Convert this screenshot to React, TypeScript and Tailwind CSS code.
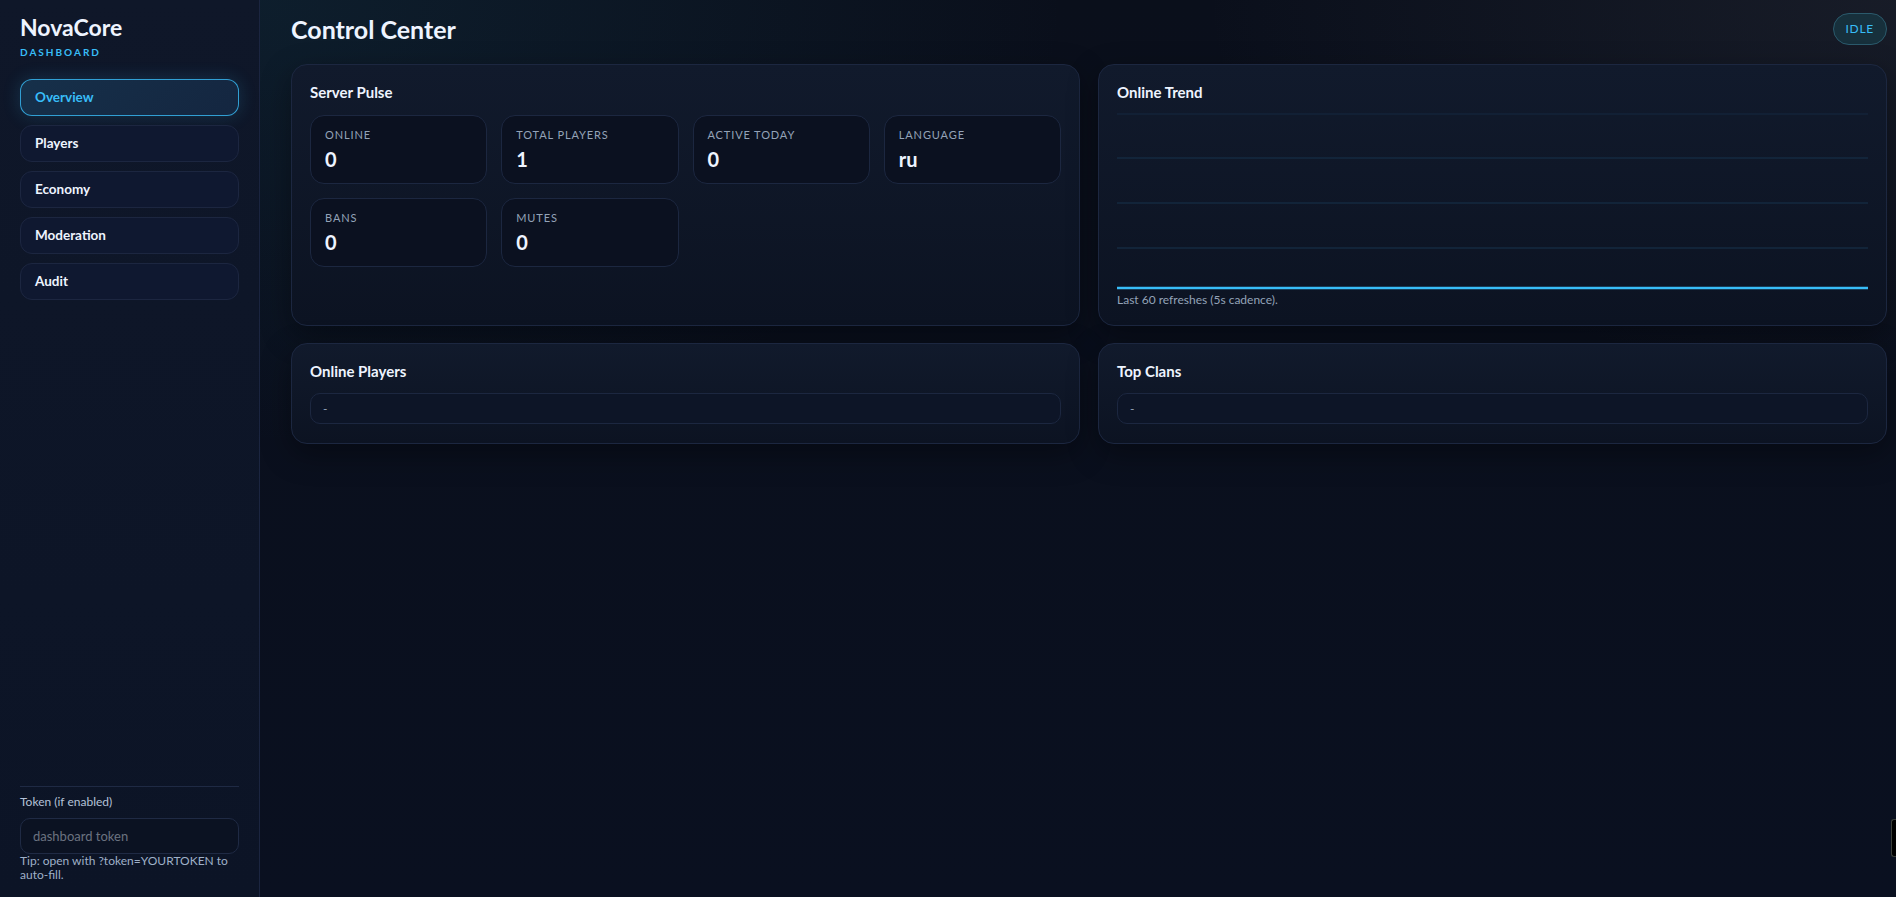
import React from "react";

const navItems = ["Overview", "Players", "Economy", "Moderation", "Audit"];

const stats: { label: string; value: string }[] = [
  { label: "Online", value: "0" },
  { label: "Total Players", value: "1" },
  { label: "Active Today", value: "0" },
  { label: "Language", value: "ru" },
  { label: "Bans", value: "0" },
  { label: "Mutes", value: "0" },
];

function Card({ title, children, tall }: { title: string; children: React.ReactNode; tall?: boolean }) {
  return (
    <div
      className={
        tall
          ? "rounded-[16px] border border-[#1c2740] bg-[linear-gradient(180deg,#111a2c_0%,#0c1322_100%)] px-[18px] pt-[17px] pb-[19px] shadow-[0_10px_30px_rgba(0,0,0,0.35)]"
          : "rounded-[16px] border border-[#1c2740] bg-[linear-gradient(180deg,#111a2c_0%,#0c1322_100%)] px-[18px] pt-[17px] pb-[17px] shadow-[0_10px_30px_rgba(0,0,0,0.35)]"
      }
    >
      <h2 className="text-[15px] leading-[20px] font-bold text-[#eef4ff]">{title}</h2>
      {children}
    </div>
  );
}

export default function App() {
  return (
    <div className="flex h-[897px] w-full overflow-hidden bg-[#0a0f1c] font-['Lato','Noto_Sans',sans-serif] text-slate-100">
      {/* Sidebar */}
      <aside className="flex h-full w-[260px] shrink-0 flex-col border-r border-[#1b2540] bg-[linear-gradient(180deg,#0f1729_0%,#0c1426_100%)] px-5 pt-[14px] pb-[15px]">
        <div className="text-[23px] leading-[26px] font-bold text-[#eef4ff]">NovaCore</div>
        <div className="mt-[6px] text-[10px] leading-[12px] font-bold tracking-[0.2em] text-[#38bdf8]">DASHBOARD</div>
        <nav className="mt-[21px] flex flex-col gap-[9px]">
          {navItems.map((item, i) =>
            i === 0 ? (
              <div
                key={item}
                className="flex h-[37px] items-center rounded-[12px] border border-[#38bdf8]/80 bg-[linear-gradient(135deg,#16304a_0%,#142640_100%)] px-[14px] text-[13.5px] font-bold text-[#38bdf8] shadow-[0_0_18px_rgba(56,189,248,0.18)]"
              >
                {item}
              </div>
            ) : (
              <div
                key={item}
                className="flex h-[37px] items-center rounded-[12px] border border-[#1c2640] bg-[#0f1830] px-[14px] text-[13.5px] font-bold text-[#eef4ff]"
              >
                {item}
              </div>
            )
          )}
        </nav>
        <div className="mt-auto border-t border-[#1f2a44] pt-[7px]">
          <div className="text-[12px] leading-[16px] text-[#b4c2d8]">Token (if enabled)</div>
          <input
            className="mt-[8px] h-[36px] w-full rounded-[10px] border border-[#1f2a44] bg-[#0b1222] px-[12px] text-[13px] text-slate-200 outline-none placeholder:text-[#6b7280]"
            placeholder="dashboard token"
          />
          <div className="text-[12px] leading-[14px] text-[#9fb0c8]">Tip: open with ?token=YOURTOKEN to auto-fill.</div>
        </div>
      </aside>

      {/* Main */}
      <main className="relative flex-1 bg-[radial-gradient(ellipse_at_0%_0%,rgba(34,120,150,0.14),transparent_35%),radial-gradient(ellipse_at_100%_0%,rgba(120,120,130,0.12),transparent_30%),linear-gradient(180deg,#0a0f1b_0%,#0a1020_100%)] pt-[13px] pr-[9px] pl-[31px]">
        <header className="flex h-[32px] items-center justify-between">
          <h1 className="text-[25px] leading-[30px] font-bold text-[#eef4ff]">Control Center</h1>
          <span className="flex h-[32px] items-center rounded-full border border-[#2b5a6c] bg-[#17303c] px-[12px] text-[12px] tracking-[0.06em] text-[#38bdf8]">
            IDLE
          </span>
        </header>

        <div className="mt-[19px] grid grid-cols-2 gap-x-[18px] gap-y-[17px]">
          <Card title="Server Pulse">
            <div className="mt-[13px] grid grid-cols-4 gap-[14px]">
              {stats.map((s) => (
                <div
                  key={s.label}
                  className="h-[69px] rounded-[14px] border border-[#1c2740] bg-[#0b1120] px-[14px] pt-[12px]"
                >
                  <div className="text-[11px] leading-[14px] tracking-[0.08em] text-[#94a3b8] uppercase">{s.label}</div>
                  <div className="mt-[5px] text-[20px] leading-[24px] font-bold text-[#eef4ff]">{s.value}</div>
                </div>
              ))}
            </div>
          </Card>

          <Card title="Online Trend">
            <svg className="mt-[10px] block h-[180px] w-full" preserveAspectRatio="none" viewBox="0 0 1000 180">
              <line x1="0" y1="2" x2="1000" y2="2" stroke="#13233a" strokeWidth="1.5" vectorEffect="non-scaling-stroke" />
              <line x1="0" y1="46" x2="1000" y2="46" stroke="#152a40" strokeWidth="1.5" vectorEffect="non-scaling-stroke" />
              <line x1="0" y1="91" x2="1000" y2="91" stroke="#152a40" strokeWidth="1.5" vectorEffect="non-scaling-stroke" />
              <line x1="0" y1="136" x2="1000" y2="136" stroke="#152a40" strokeWidth="1.5" vectorEffect="non-scaling-stroke" />
              <line x1="0" y1="176" x2="1000" y2="176" stroke="#38bdf8" strokeWidth="2.5" vectorEffect="non-scaling-stroke" />
            </svg>
            <div className="text-[12px] leading-[16px] text-[#94a3b8]">Last 60 refreshes (5s cadence).</div>
          </Card>

          <Card title="Online Players" tall>
            <div className="mt-[12px] flex h-[31px] items-center rounded-[10px] border border-[#1c2740] bg-[#0d1527] px-[12px] text-[12px] text-[#94a3b8]">
              -
            </div>
          </Card>

          <Card title="Top Clans" tall>
            <div className="mt-[12px] flex h-[31px] items-center rounded-[10px] border border-[#1c2740] bg-[#0d1527] px-[12px] text-[12px] text-[#94a3b8]">
              -
            </div>
          </Card>
        </div>

        <div className="absolute right-0 bottom-[40px] h-[38px] w-[5px] rounded-l-[3px] border border-r-0 border-[#3a3f3a] bg-black" />
      </main>
    </div>
  );
}
